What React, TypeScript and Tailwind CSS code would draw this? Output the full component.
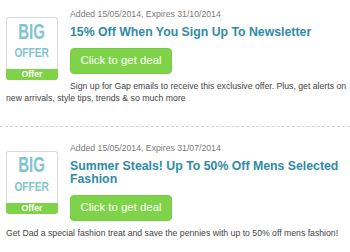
import React from 'react';

type Deal = {
  added: string;
  expires: string;
  title: string;
  text: string;
};

const deals: Deal[] = [
  {
    added: '15/05/2014',
    expires: '31/10/2014',
    title: '15% Off When You Sign Up To Newsletter',
    text: 'Sign up for Gap emails to receive this exclusive offer. Plus, get alerts on new arrivals, style tips, trends & so much more',
  },
  {
    added: '15/05/2014',
    expires: '31/07/2014',
    title: 'Summer Steals! Up To 50% Off Mens Selected Fashion',
    text: 'Get Dad a special fashion treat and save the pennies with up to 50% off mens fashion!',
  },
];

function Badge() {
  return (
    <div className="float-left mt-[9px] mr-3 w-[52px]">
      <div className="flex h-[52px] flex-col items-center rounded-t-[3px] border border-b-0 border-[#dadada] bg-white">
        <span className="mt-[2.5px] inline-block scale-x-[0.68] text-[22px] leading-[22px] font-bold text-[#80c4cf]">
          BIG
        </span>
        <span className="mt-[3.5px] inline-block scale-x-[0.76] text-[13.4px] leading-[13.4px] font-bold text-[#80c4cf]">
          OFFER
        </span>
      </div>
      <div className="h-[11px] rounded-b-[3px] bg-[#7ed348] text-center text-[8.8px] leading-[11px] font-bold text-white">
        Offer
      </div>
    </div>
  );
}

function DealRow({ deal, first }: { deal: Deal; first: boolean }) {
  return (
    <div
      className={
        'border-b border-dashed border-[#d2d2d2] pl-[6px] pr-[2px] pb-[21px] ' +
        (first ? 'pt-2' : 'pt-[15px]')
      }
    >
      <Badge />
      <p className="text-[8.7px] leading-3 text-[#7a7a7a]">
        Added {deal.added}, Expires {deal.expires}
      </p>
      <h3 className="mt-[6.4px] text-[12.3px] leading-[13px] font-bold text-[#2f8ba6]">
        {deal.title}
      </h3>
      <div className="mt-[7.6px]">
        <button className="h-[26px] w-[102px] rounded-[4px] border border-[#76cc42] bg-[#7ed348] text-[11.4px] text-white">
          Click to get deal
        </button>
      </div>
      <p className="mt-[6px] text-[8.7px] leading-[12.7px] text-[#444]">{deal.text}</p>
      <div className="clear-both" />
    </div>
  );
}

export default function App() {
  return (
    <div className="h-[252px] w-[350px] overflow-hidden bg-white font-['Liberation_Sans',Arial,sans-serif]">
      {deals.map((d, i) => (
        <DealRow key={i} deal={d} first={i === 0} />
      ))}
    </div>
  );
}
